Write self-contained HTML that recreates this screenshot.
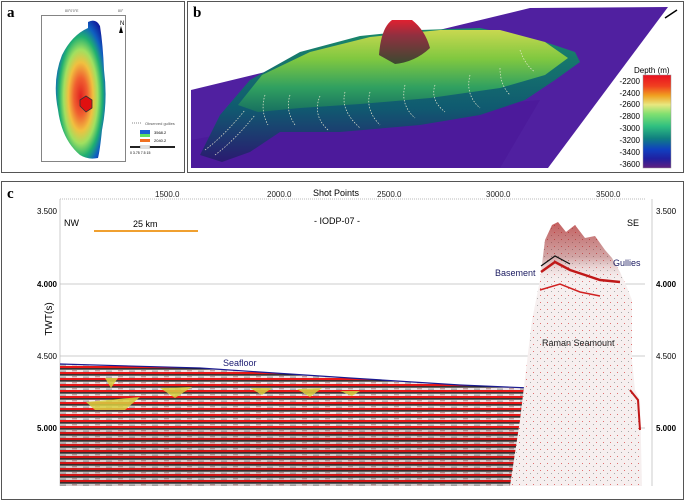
<!DOCTYPE html>
<html><head><meta charset="utf-8"><style>
html,body{margin:0;padding:0;background:#fff;}
body{width:685px;height:501px;overflow:hidden;position:relative;font-family:"Liberation Sans",sans-serif;}
svg{position:absolute;left:0;top:0;}
</style></head><body>
<svg width="685" height="501" viewBox="0 0 685 501" xmlns="http://www.w3.org/2000/svg">
<defs>
<radialGradient id="isl" cx="0.5" cy="0.55" r="0.62">
<stop offset="0" stop-color="#e02020"/><stop offset="0.22" stop-color="#f06030"/><stop offset="0.4" stop-color="#f0c040"/><stop offset="0.55" stop-color="#a0e060"/><stop offset="0.7" stop-color="#20b070"/><stop offset="0.85" stop-color="#1060c0"/><stop offset="1" stop-color="#1020a0"/>
</radialGradient>
<linearGradient id="top" x1="0" y1="0" x2="0" y2="1">
<stop offset="0" stop-color="#c8d850"/><stop offset="0.35" stop-color="#80c840"/><stop offset="0.7" stop-color="#30a060"/><stop offset="1" stop-color="#187060"/>
</linearGradient>
<linearGradient id="side" x1="0" y1="0" x2="0" y2="1">
<stop offset="0" stop-color="#1a8a6a"/><stop offset="0.6" stop-color="#105a70"/><stop offset="1" stop-color="#2a1a70"/>
</linearGradient>
<linearGradient id="cone" x1="0" y1="0" x2="0" y2="1">
<stop offset="0" stop-color="#e02030"/><stop offset="0.35" stop-color="#903040"/><stop offset="1" stop-color="#3a4a30"/>
</linearGradient>
<linearGradient id="cbar" x1="0" y1="0" x2="0" y2="1">
<stop offset="0" stop-color="#e81020"/><stop offset="0.12" stop-color="#f04020"/><stop offset="0.22" stop-color="#f0a020"/><stop offset="0.32" stop-color="#e8e880"/><stop offset="0.42" stop-color="#80e070"/><stop offset="0.55" stop-color="#30c080"/><stop offset="0.68" stop-color="#108080"/><stop offset="0.8" stop-color="#1040c0"/><stop offset="0.9" stop-color="#2020a0"/><stop offset="1" stop-color="#602080"/>
</linearGradient>
<pattern id="seis" width="23" height="6" patternUnits="userSpaceOnUse">
<rect width="23" height="6" fill="#efe6e6"/>
<rect y="0" width="23" height="2.2" fill="#e81818"/>
<rect y="2.2" width="23" height="1.4" fill="#151515"/>
<rect x="3" y="4.3" width="5" height="1" fill="#b08080"/><rect x="14" y="4.6" width="6" height="1" fill="#909090"/>
</pattern>
<pattern id="mount" width="7" height="7" patternUnits="userSpaceOnUse">
<rect width="7" height="7" fill="#f6efef"/>
<rect x="1" y="1" width="1" height="1" fill="#e07070"/><rect x="5" y="4" width="1" height="1" fill="#aaa"/>
</pattern>
<linearGradient id="mtop" x1="0" y1="0" x2="0" y2="1">
<stop offset="0" stop-color="#b02020" stop-opacity="0.7"/><stop offset="0.4" stop-color="#902020" stop-opacity="0.35"/><stop offset="0.7" stop-color="#fff" stop-opacity="0"/>
</linearGradient>
</defs>

<!-- Panel a -->
<rect x="1.5" y="1.5" width="183" height="171" fill="#fff" stroke="#555" stroke-width="1"/>
<text x="7" y="17" font-family="Liberation Serif" font-weight="bold" font-size="15">a</text>
<rect x="41.5" y="15.5" width="84" height="146" fill="#fff" stroke="#333" stroke-width="0.6"/>
<path d="M88,22 Q96,18 100,26 Q103,45 104,70 Q108,100 102,130 Q100,150 98,158 Q88,160 80,155 Q62,140 58,110 Q52,80 62,55 Q72,35 88,28 Z" fill="url(#isl)"/>
<path d="M80,100 L86,96 L92,100 L92,108 L86,112 L80,106 Z" fill="#e01010" stroke="#333" stroke-width="0.8"/>
<text x="120" y="25" font-size="6">N</text><path d="M119,33 L121,26 L123,33 Z" fill="#000"/>
<text x="65" y="12" font-size="3.5" fill="#555">80°0'0"E</text><text x="118" y="12" font-size="3.5" fill="#555">80°</text>
<line x1="132" y1="123" x2="142" y2="123" stroke="#888" stroke-dasharray="1,1"/><text x="145" y="125" font-size="4" fill="#555">Observed gullies</text>
<rect x="140" y="130" width="10" height="4" fill="#1a60d0"/><rect x="140" y="134" width="10" height="3" fill="#60e060"/><rect x="140" y="139" width="10" height="3" fill="#f07020"/>
<text x="154" y="134" font-size="4">3568.2</text><text x="154" y="142" font-size="4">2040.2</text>
<rect x="130" y="146" width="45" height="2" fill="#222"/><rect x="140" y="146" width="10" height="2" fill="#fff" stroke="#222" stroke-width="0.3"/>
<text x="130" y="154" font-size="3.5">0 3.75 7.5 15</text>

<!-- Panel b -->
<rect x="187.5" y="1.5" width="496" height="171" fill="#fff" stroke="#555" stroke-width="1"/>
<text x="193" y="17" font-family="Liberation Serif" font-weight="bold" font-size="15">b</text>
<path d="M191,90 L530,8 L668,7 L548,168 L191,168 Z" fill="#5020a0"/>
<path d="M191,140 L300,120 L540,100 L500,168 L191,168 Z" fill="#4a1898" opacity="0.6"/>
<path d="M200,155 L220,115 L250,80 L300,52 L360,36 L420,30 L480,28 L545,42 L575,52 L580,62 L555,80 L525,100 L480,115 L420,125 L340,132 L280,132 L250,152 L222,162 Z" fill="url(#side)"/>
<path d="M238,105 L262,75 L310,52 L370,37 L440,30 L500,30 L545,42 L568,58 L545,75 L500,88 L430,98 L360,104 L300,108 L258,112 Z" fill="url(#top)"/>
<path d="M379,55 Q381,28 392,20 L412,20 Q425,30 430,48 Q415,62 395,64 Z" fill="url(#cone)"/>
<g stroke="#e8e8d0" stroke-width="0.7" stroke-dasharray="1.5,1.5" fill="none">
<path d="M265,95 Q260,110 268,125"/><path d="M290,95 Q285,110 295,125"/><path d="M320,96 Q312,115 328,130"/><path d="M345,92 Q340,110 360,128"/><path d="M370,92 Q365,110 380,125"/><path d="M405,85 Q400,105 415,118"/><path d="M435,85 Q430,100 445,112"/><path d="M470,75 Q465,95 480,108"/><path d="M500,68 Q500,85 510,95"/><path d="M520,50 Q525,65 535,72"/><path d="M205,150 Q225,135 245,110"/><path d="M215,155 Q235,140 255,115"/>
</g>
<text x="634" y="73" font-size="8">Depth (m)</text>
<rect x="643" y="75" width="28" height="93" fill="url(#cbar)" stroke="#999" stroke-width="0.5"/>
<g font-size="8" text-anchor="end"><text x="640" y="84">-2200</text><text x="640" y="96">-2400</text><text x="640" y="107">-2600</text><text x="640" y="119">-2800</text><text x="640" y="131">-3000</text><text x="640" y="143">-3200</text><text x="640" y="155">-3400</text><text x="640" y="167">-3600</text></g>
<path d="M665,18 L677,10" stroke="#000" stroke-width="1.5"/>

<!-- Panel c -->
<rect x="1.5" y="181.5" width="682" height="318" fill="#fff" stroke="#555" stroke-width="1"/>
<text x="7" y="198" font-family="Liberation Serif" font-weight="bold" font-size="15">c</text>
<g font-size="8" fill="#222"><text x="155" y="197">1500.0</text><text x="267" y="197">2000.0</text><text x="377" y="197">2500.0</text><text x="486" y="197">3000.0</text><text x="596" y="197">3500.0</text></g>
<text x="313" y="196" font-size="9">Shot Points</text>
<line x1="60" y1="199" x2="645" y2="199" stroke="#bbb" stroke-dasharray="1,1"/>
<line x1="60" y1="199" x2="60" y2="486" stroke="#ccc"/>
<line x1="652" y1="199" x2="652" y2="486" stroke="#ccc"/>
<g stroke="#bbb" stroke-width="0.8"><line x1="60" y1="284" x2="645" y2="284"/><line x1="60" y1="356" x2="645" y2="356"/><line x1="60" y1="428" x2="645" y2="428"/></g>
<g font-size="8" text-anchor="end"><text x="57" y="214">3.500</text><text x="57" y="287" font-weight="bold">4.000</text><text x="57" y="359">4.500</text><text x="57" y="431" font-weight="bold">5.000</text></g>
<g font-size="8"><text x="656" y="214">3.500</text><text x="656" y="287" font-weight="bold">4.000</text><text x="656" y="359">4.500</text><text x="656" y="431" font-weight="bold">5.000</text></g>
<text x="52" y="340" font-size="10" transform="rotate(-90 52 340)" text-anchor="middle" dx="21">TWT(s)</text>
<text x="64" y="226" font-size="9">NW</text>
<text x="133" y="227" font-size="9">25 km</text>
<line x1="94" y1="231" x2="198" y2="231" stroke="#f0a030" stroke-width="2"/>
<text x="314" y="224" font-size="9">- IODP-07 -</text>
<text x="627" y="226" font-size="9">SE</text>
<!-- seismic sediments -->
<path d="M60,364 L200,368 L350,378 L460,385 L530,388 L530,486 L60,486 Z" fill="url(#seis)"/>
<path d="M60,364 L200,368 L350,378 L460,385 L530,388" stroke="#1a1a90" stroke-width="1.2" fill="none"/>
<path d="M60,430 L530,430 L530,486 L60,486 Z" fill="#000" opacity="0.1"/>
<text x="223" y="366" font-size="9" fill="#1a1a70">Seafloor</text>
<g fill="#d8d040" opacity="0.85"><path d="M86,402 L140,397 L125,410 L95,410 Z"/><path d="M105,378 L118,378 L111,388 Z"/><path d="M160,388 L192,387 L175,398 Z"/><path d="M250,388 L272,388 L262,395 Z"/><path d="M297,389 L322,388 L310,397 Z"/><path d="M340,391 L360,391 L352,396 Z"/></g>
<!-- seamount -->
<path d="M510,486 L520,420 L532,320 L540,280 L545,240 L552,225 L558,222 L566,232 L575,225 L585,238 L595,236 L605,250 L612,258 L620,272 L626,285 L632,300 L632,360 L635,390 L640,400 L642,486 Z" fill="url(#mount)"/>
<path d="M540,280 L545,240 L552,225 L558,222 L566,232 L575,225 L585,238 L595,236 L605,250 L612,258 L620,272 L626,285 L630,300 L610,310 L560,310 L540,300 Z" fill="url(#mtop)"/>
<path d="M541,272 L555,262 L570,270 L585,275 L600,280 L620,282" stroke="#c01818" stroke-width="2.5" fill="none"/>
<path d="M541,266 L555,256 L570,264" stroke="#111" stroke-width="1.2" fill="none"/>
<path d="M540,290 L560,284 L580,292 L600,296" stroke="#d02020" stroke-width="1.5" fill="none"/>
<path d="M630,390 L638,400 L640,430" stroke="#c01818" stroke-width="2" fill="none"/>
<text x="495" y="276" font-size="9" fill="#1a1a60">Basement</text>
<text x="613" y="266" font-size="9" fill="#1a1a60">Gullies</text>
<text x="542" y="346" font-size="9" fill="#222">Raman Seamount</text>
</svg>
</body></html>
